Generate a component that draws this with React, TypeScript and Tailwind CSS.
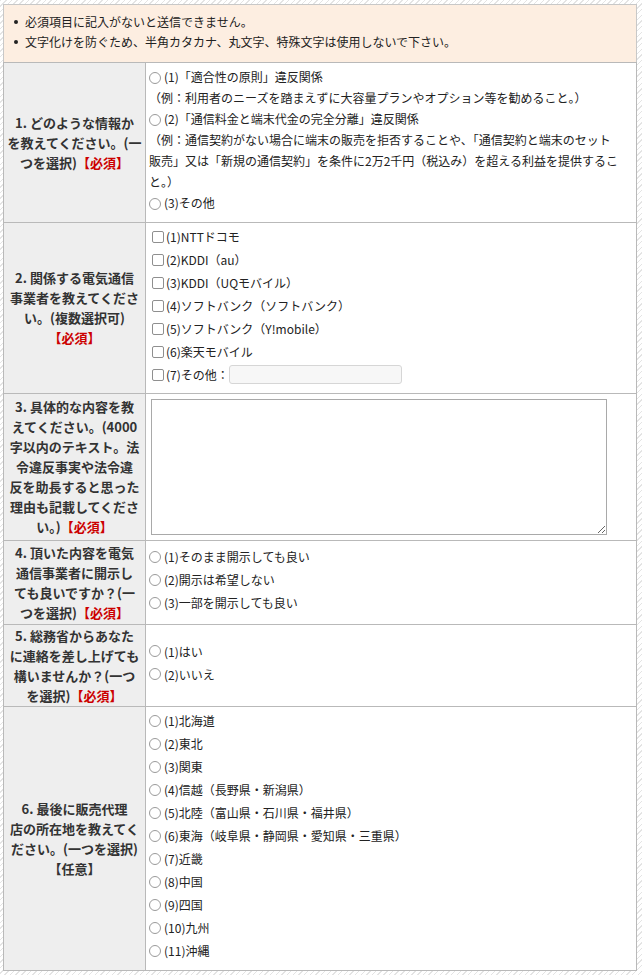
import React from "react";

const Req = () => <span className="text-[#cc0000]">【必須】</span>;

function Radio({ name }: { name: string }) {
  return (
    <input
      type="radio"
      name={name}
      className="appearance-none shrink-0 w-[12px] h-[12px] rounded-full border border-[#9a9a9a] bg-white mr-[3px] m-0"
    />
  );
}

function Check() {
  return (
    <input
      type="checkbox"
      className="appearance-none shrink-0 w-[12px] h-[12px] rounded-[2px] border border-[#8f8f8f] bg-white ml-[3px] mr-[2px] m-0"
    />
  );
}

function RadioList({ name, items }: { name: string; items: string[] }) {
  return (
    <div className="pt-[2px] pb-[8px]">
      {items.map((t) => (
        <label key={t} className="flex items-center h-[23px] leading-[23px] whitespace-nowrap">
          <Radio name={name} />
          <span>{t}</span>
        </label>
      ))}
    </div>
  );
}

function Th({ children }: { children: React.ReactNode }) {
  return (
    <th className="w-[141px] bg-[#eeeeee] border border-[#b9b9b9] text-center align-middle font-bold text-[13px] leading-[20px] text-[#333333] px-[3px] py-0 whitespace-nowrap">
      {children}
    </th>
  );
}

function Td({ children }: { children: React.ReactNode }) {
  return (
    <td className="border border-[#b9b9b9] align-middle pl-[3px] pr-[3px] py-0 text-[12px] text-[#222222] bg-white">
      {children}
    </td>
  );
}

export default function App() {
  return (
    <div className="min-h-[975px] bg-[repeating-linear-gradient(135deg,#e4e4e4_0px,#e4e4e4_1px,#ffffff_1px,#ffffff_4px)] pt-[4px] pl-[3px] pr-[5px] pb-[4px] font-['Noto_Sans_CJK_JP','Noto_Sans',sans-serif]">
      <div className="w-[634px]">
        <div className="bg-[#fdeee1] border border-[#c8c8c8] border-b-0 pl-[9px] pt-[7px] pb-[10px] text-[12px] leading-[20px] text-[#222222]">
          <ul>
            <li className="flex items-center">
              <span className="w-[4px] h-[4px] rounded-full bg-[#222] mr-[7px] ml-[1px]" />
              必須項目に記入がないと送信できません。
            </li>
            <li className="flex items-center">
              <span className="w-[4px] h-[4px] rounded-full bg-[#222] mr-[7px] ml-[1px]" />
              文字化けを防ぐため、半角カタカナ、丸文字、特殊文字は使用しないで下さい。
            </li>
          </ul>
        </div>
        <table className="w-full border-collapse table-fixed">
          <colgroup>
            <col className="w-[142px]" />
            <col />
          </colgroup>
          <tbody>
            <tr className="h-[160px]">
              <Th>
                1. どのような情報か
                <br />
                を教えてください。(一
                <br />
                つを選択)<Req />
              </Th>
              <Td>
                <div className="pt-[2px] pb-[9px] leading-[21px] whitespace-nowrap">
                  <label className="block">
                    <span className="inline-flex items-center align-middle">
                      <Radio name="q1" />
                    </span>
                    (1)「適合性の原則」違反関係
                    <br />
                    （例：利用者のニーズを踏まえずに大容量プランやオプション等を勧めること。）
                  </label>
                  <label className="block">
                    <span className="inline-flex items-center align-middle">
                      <Radio name="q1" />
                    </span>
                    (2)「通信料金と端末代金の完全分離」違反関係
                    <br />
                    （例：通信契約がない場合に端末の販売を拒否することや、「通信契約と端末のセット
                    <br />
                    販売」又は「新規の通信契約」を条件に2万2千円（税込み）を超える利益を提供するこ
                    <br />
                    と。）
                  </label>
                  <label className="block">
                    <span className="inline-flex items-center align-middle">
                      <Radio name="q1" />
                    </span>
                    (3)その他
                  </label>
                </div>
              </Td>
            </tr>
            <tr>
              <Th>
                2. 関係する電気通信
                <br />
                事業者を教えてくださ
                <br />
                い。(複数選択可)
                <br />
                <Req />
              </Th>
              <Td>
                <div className="pt-[2px] pb-[7px]">
                  {[
                    "(1)NTTドコモ",
                    "(2)KDDI（au）",
                    "(3)KDDI（UQモバイル）",
                    "(4)ソフトバンク（ソフトバンク）",
                    "(5)ソフトバンク（Y!mobile）",
                    "(6)楽天モバイル",
                  ].map((t) => (
                    <label key={t} className="flex items-center h-[23px] whitespace-nowrap">
                      <Check />
                      <span>{t}</span>
                    </label>
                  ))}
                  <label className="flex items-center h-[23px] whitespace-nowrap">
                    <Check />
                    <span>(7)その他：</span>
                    <input
                      type="text"
                      className="w-[173px] h-[19px] bg-[#f7f7f7] border border-[#d6d6d6] rounded-[3px] outline-none"
                    />
                  </label>
                </div>
              </Td>
            </tr>
            <tr>
              <Th>
                3. 具体的な内容を教
                <br />
                えてください。(4000
                <br />
                字以内のテキスト。法
                <br />
                令違反事実や法令違
                <br />
                反を助長すると思った
                <br />
                理由も記載してくださ
                <br />
                い。)<Req />
              </Th>
              <Td>
                <textarea className="block w-[456px] h-[136px] ml-[2px] my-[5px] border border-[#a9a9a9] bg-white outline-none" />
              </Td>
            </tr>
            <tr className="h-[84px]">
              <Th>
                4. 頂いた内容を電気
                <br />
                通信事業者に開示し
                <br />
                ても良いですか？(一
                <br />
                つを選択)<Req />
              </Th>
              <Td>
                <RadioList
                  name="q4"
                  items={["(1)そのまま開示しても良い", "(2)開示は希望しない", "(3)一部を開示しても良い"]}
                />
              </Td>
            </tr>
            <tr className="h-[82px]">
              <Th>
                5. 総務省からあなた
                <br />
                に連絡を差し上げても
                <br />
                構いませんか？(一つ
                <br />
                を選択)<Req />
              </Th>
              <Td>
                <RadioList name="q5" items={["(1)はい", "(2)いいえ"]} />
              </Td>
            </tr>
            <tr>
              <Th>
                6. 最後に販売代理
                <br />
                店の所在地を教えてく
                <br />
                ださい。(一つを選択)
                <br />
                【任意】
              </Th>
              <Td>
                <RadioList
                  name="q6"
                  items={[
                    "(1)北海道",
                    "(2)東北",
                    "(3)関東",
                    "(4)信越（長野県・新潟県）",
                    "(5)北陸（富山県・石川県・福井県）",
                    "(6)東海（岐阜県・静岡県・愛知県・三重県）",
                    "(7)近畿",
                    "(8)中国",
                    "(9)四国",
                    "(10)九州",
                    "(11)沖縄",
                  ]}
                />
              </Td>
            </tr>
          </tbody>
        </table>
      </div>
    </div>
  );
}
